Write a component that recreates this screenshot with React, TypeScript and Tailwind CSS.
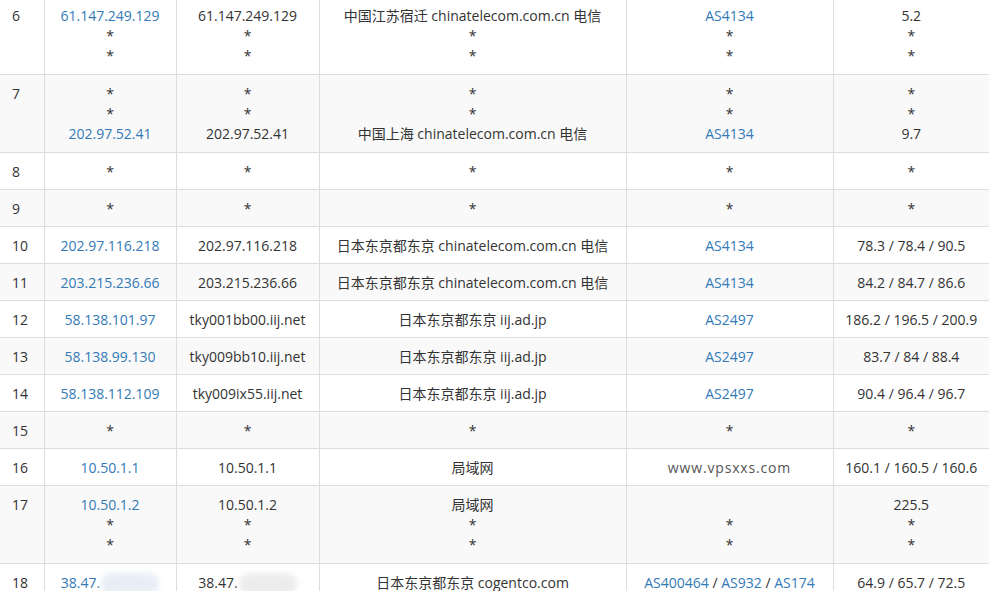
type Cell = string[]
type Row = { n: string; ip: Cell; host: Cell; loc: Cell; asn: Cell; rtt: Cell; blur?: boolean; wm?: boolean }

const rows: Row[] = [
  { n: "6", ip: ["61.147.249.129", "*", "*"], host: ["61.147.249.129", "*", "*"], loc: ["中国江苏宿迁 chinatelecom.com.cn 电信", "*", "*"], asn: ["AS4134", "*", "*"], rtt: ["5.2", "*", "*"] },
  { n: "7", ip: ["*", "*", "202.97.52.41"], host: ["*", "*", "202.97.52.41"], loc: ["*", "*", "中国上海 chinatelecom.com.cn 电信"], asn: ["*", "*", "AS4134"], rtt: ["*", "*", "9.7"] },
  { n: "8", ip: ["*"], host: ["*"], loc: ["*"], asn: ["*"], rtt: ["*"] },
  { n: "9", ip: ["*"], host: ["*"], loc: ["*"], asn: ["*"], rtt: ["*"] },
  { n: "10", ip: ["202.97.116.218"], host: ["202.97.116.218"], loc: ["日本东京都东京 chinatelecom.com.cn 电信"], asn: ["AS4134"], rtt: ["78.3 / 78.4 / 90.5"] },
  { n: "11", ip: ["203.215.236.66"], host: ["203.215.236.66"], loc: ["日本东京都东京 chinatelecom.com.cn 电信"], asn: ["AS4134"], rtt: ["84.2 / 84.7 / 86.6"] },
  { n: "12", ip: ["58.138.101.97"], host: ["tky001bb00.iij.net"], loc: ["日本东京都东京 iij.ad.jp"], asn: ["AS2497"], rtt: ["186.2 / 196.5 / 200.9"] },
  { n: "13", ip: ["58.138.99.130"], host: ["tky009bb10.iij.net"], loc: ["日本东京都东京 iij.ad.jp"], asn: ["AS2497"], rtt: ["83.7 / 84 / 88.4"] },
  { n: "14", ip: ["58.138.112.109"], host: ["tky009ix55.iij.net"], loc: ["日本东京都东京 iij.ad.jp"], asn: ["AS2497"], rtt: ["90.4 / 96.4 / 96.7"] },
  { n: "15", ip: ["*"], host: ["*"], loc: ["*"], asn: ["*"], rtt: ["*"] },
  { n: "16", ip: ["10.50.1.1"], host: ["10.50.1.1"], loc: ["局域网"], asn: [""], rtt: ["160.1 / 160.5 / 160.6"], wm: true },
  { n: "17", ip: ["10.50.1.2", "*", "*"], host: ["10.50.1.2", "*", "*"], loc: ["局域网", "*", "*"], asn: ["", "*", "*"], rtt: ["225.5", "*", "*"] },
  { n: "18", ip: ["38.47."], host: ["38.47."], loc: ["日本东京都东京 cogentco.com"], asn: ["AS400464 / AS932 / AS174"], rtt: ["64.9 / 65.7 / 72.5"], blur: true },
]

function Lines({ items, link }: { items: string[]; link?: boolean }) {
  return (
    <>
      {items.map((t, i) => (
        <div key={i} className={t !== "*" && link ? "text-[#337ab7]" : ""}>
          {t === "" ? "\u00a0" : t}
        </div>
      ))}
    </>
  )
}

function Blob({ tint }: { tint: string }) {
  return <span className={`inline-block align-middle ml-[1px] w-[58px] h-[22px] rounded-full blur-[3px] ${tint}`} />
}

export default function App() {
  return (
    <div className="w-[989px] h-[591px] overflow-hidden bg-white text-[14px] leading-[19px] text-[#333]" style={{ fontFamily: '"Open Sans", "Noto Sans", "Noto Sans CJK SC", sans-serif' }}>
      <table className="w-[989px] border-collapse table-fixed -mt-[4px]">
        <colgroup>
          <col className="w-[44px]" />
          <col className="w-[132px]" />
          <col className="w-[143px]" />
          <col className="w-[307px]" />
          <col className="w-[207px]" />
          <col />
        </colgroup>
        <tbody>
          {rows.map((r, i) => {
            const cell = `border border-[#ddd] pt-[9px] pb-[8px] align-top ${r.ip.length > 1 ? "leading-[20px]" : ""}`
            return (
              <tr key={r.n} className={i % 2 === 1 ? "bg-[#f9f9f9]" : "bg-white"}>
                <td className={`${cell} border-l-0 px-[12px]`}>{r.n}</td>
                <td className={`${cell} text-center`}>
                  {r.blur ? (
                    <div className="text-[#337ab7]">38.47.<Blob tint="bg-[#e8eef6]" /></div>
                  ) : (
                    <Lines items={r.ip} link />
                  )}
                </td>
                <td className={`${cell} text-center`}>
                  {r.blur ? <div>38.47.<Blob tint="bg-[#ececec]" /></div> : <Lines items={r.host} />}
                </td>
                <td className={`${cell} text-center whitespace-nowrap`}>
                  <Lines items={r.loc} />
                </td>
                <td className={`${cell} text-center whitespace-nowrap`}>
                  {r.wm ? (
                    <div className="text-[#555] tracking-[0.06em]">www.vpsxxs.com</div>
                  ) : r.blur ? (
                    <div>
                      <span className="text-[#337ab7]">AS400464</span> / <span className="text-[#337ab7]">AS932</span> / <span className="text-[#337ab7]">AS174</span>
                    </div>
                  ) : (
                    <Lines items={r.asn} link />
                  )}
                </td>
                <td className={`${cell} border-r-0 text-center whitespace-nowrap`}>
                  <Lines items={r.rtt} />
                </td>
              </tr>
            )
          })}
        </tbody>
      </table>
    </div>
  )
}
